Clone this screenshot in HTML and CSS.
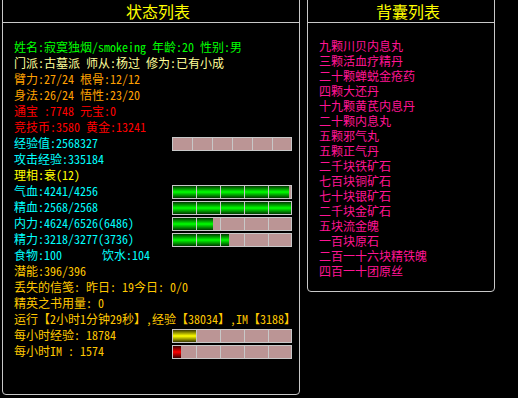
FILE: index.html
```html
<html>

<head>
    <link rel="stylesheet" href="styles.css">
    <title>状态列表</title>
</head>

<body>
    <div class="wrap">
        <div class="panel panel-left">
            <div class="panel-title">状态列表</div>
            <div class="stats">
                <div class="row c-green"><span>姓名:寂寞独烟/smokeing 年龄:20 性别:男</span></div>
                <div class="row c-pale"><span>门派:古墓派 师从:杨过 修为:已有小成</span></div>
                <div class="row c-orange"><span>臂力:27/24 根骨:12/12</span></div>
                <div class="row c-orange"><span>身法:26/24 悟性:23/20</span></div>
                <div class="row c-red"><span>通宝 :7748 元宝:0</span></div>
                <div class="row c-red"><span>竞技币:3580 黄金:13241</span></div>
                <div class="row c-cyan">
                    <span>经验值:2568327</span>
                    <div class="bar six"></div>
                </div>
                <div class="row c-cyan"><span>攻击经验:335184</span></div>
                <div class="row c-yellow"><span>理相:衰(12)</span></div>
                <div class="row c-cyan">
                    <span>气血:4241/4256</span>
                    <div class="bar"><div class="fill green" style="width: 116px"></div></div>
                </div>
                <div class="row c-cyan">
                    <span>精血:2568/2568</span>
                    <div class="bar"><div class="fill green" style="width: 118px"></div></div>
                </div>
                <div class="row c-cyan">
                    <span>内力:4624/6526(6486)</span>
                    <div class="bar"><div class="fill green" style="width: 40px"></div></div>
                </div>
                <div class="row c-cyan">
                    <span>精力:3218/3277(3736)</span>
                    <div class="bar"><div class="fill green" style="width: 56px"></div></div>
                </div>
                <div class="row c-cyan"><span><span class="food">食物:100</span>饮水:104</span></div>
                <div class="row c-gold"><span>潜能:396/396</span></div>
                <div class="row c-gold"><span>丢失的信笺: 昨日: 19今日: 0/0</span></div>
                <div class="row c-gold"><span>精英之书用量: 0</span></div>
                <div class="row c-gold"><span>运行【2小时1分钟29秒】,经验【38034】,IM【3188】</span></div>
                <div class="row c-gold">
                    <span>每小时经验: 18784</span>
                    <div class="bar"><div class="fill yellow" style="width: 23px"></div></div>
                </div>
                <div class="row c-gold">
                    <span>每小时IM : 1574</span>
                    <div class="bar"><div class="fill red" style="width: 8px"></div></div>
                </div>
            </div>
        </div>

        <div class="panel panel-right">
            <div class="panel-title">背囊列表</div>
            <ul class="bag">
                <li>九颗川贝内息丸</li>
                <li>三颗活血疗精丹</li>
                <li>二十颗蝉蜕金疮药</li>
                <li>四颗大还丹</li>
                <li>十九颗黄芪内息丹</li>
                <li>二十颗内息丸</li>
                <li>五颗邪气丸</li>
                <li>五颗正气丹</li>
                <li>二千块铁矿石</li>
                <li>七百块铜矿石</li>
                <li>七十块银矿石</li>
                <li>二千块金矿石</li>
                <li>五块流金魄</li>
                <li>一百块原石</li>
                <li>二百一十六块精铁魄</li>
                <li>四百一十团原丝</li>
            </ul>
        </div>
    </div>
</body>

</html>
```

FILE: styles.css
```css
body {
    background-color: #000;
    margin: 0;
    padding: 0;
    width: 518px;
    height: 398px;
    overflow: hidden;
    font-family: "Noto Sans Mono CJK SC", "Noto Sans CJK SC", monospace;
    user-select: none;
}

.wrap {
    display: flex;
    align-items: flex-start;
    gap: 7px;
    padding-left: 2px;
    margin-top: -4px;
}

.panel {
    box-sizing: border-box;
    border: 1px solid #c8c8c8;
    border-radius: 4px;
    background-color: #000;
}

.panel-left {
    width: 298px;
    height: 399px;
}

.panel-right {
    width: 188px;
    height: 296px;
}

.panel-title {
    height: 22px;
    padding: 3px 0 0 14px;
    line-height: 22px;
    font-size: 16px;
    color: #ffff00;
    text-align: center;
    border-bottom: 1px solid #c8c8c8;
}

.stats {
    padding: 16px 7px 0 11px;
    font-size: 12px;
    line-height: 16px;
}

.stats .row {
    display: flex;
    justify-content: space-between;
    align-items: flex-end;
    height: 16px;
    white-space: nowrap;
}

.food {
    display: inline-block;
    width: 88px;
}

.c-green { color: #00ff00; }
.c-pale { color: #ffff99; }
.c-orange { color: #ffa000; }
.c-red { color: #ff0000; }
.c-cyan { color: #00ffff; }
.c-yellow { color: #ffff00; }
.c-gold { color: #ffc800; }

.bar {
    position: relative;
    box-sizing: border-box;
    width: 120px;
    height: 14px;
    border: 1px solid #c8c8c8;
    background-color: #bb9595;
}

.bar::after {
    content: "";
    position: absolute;
    inset: 0;
    background: repeating-linear-gradient(to right, transparent 0 23px, #c8c8c8 23px 24px);
}

.bar.six::after {
    background: repeating-linear-gradient(to right, transparent 0 19px, #c8c8c8 19px 20px);
}

.fill {
    height: 100%;
}

.fill.green {
    background: linear-gradient(#003800, #00ff00 50%, #003800);
}

.fill.yellow {
    background: linear-gradient(#383800, #ffff00 50%, #383800);
}

.fill.red {
    background: linear-gradient(#380000, #ff0000 50%, #380000);
}

.bag {
    list-style: none;
    margin: 0;
    padding: 15px 0 0 11px;
    font-size: 12px;
    line-height: 15px;
    color: #ff1493;
}
```
